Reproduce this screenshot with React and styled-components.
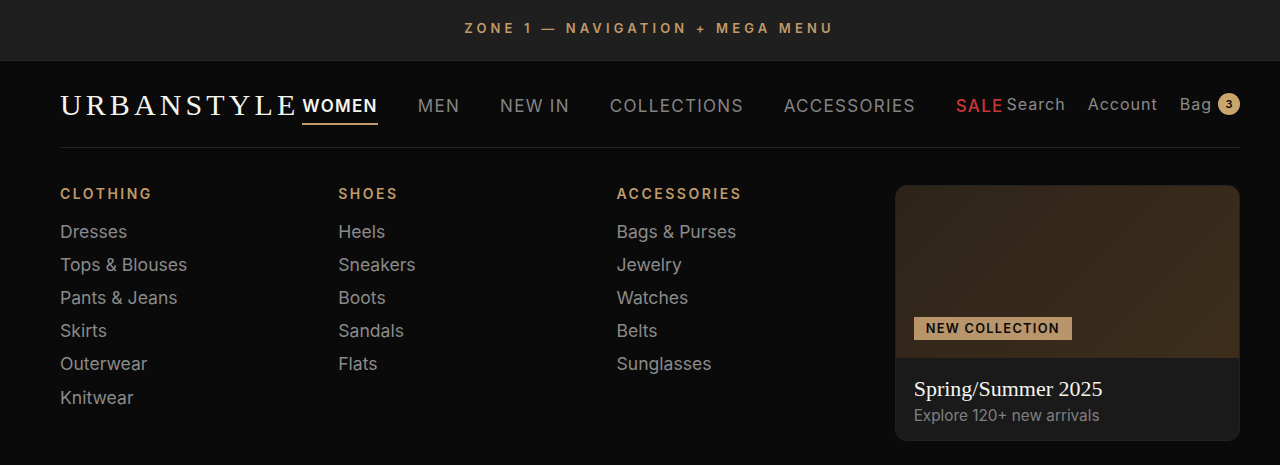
import React from "react";
import styled, { createGlobalStyle } from "styled-components";

const Global = createGlobalStyle`
  html, body { margin: 0; padding: 0; background: #0a0a0a; }
  * { box-sizing: border-box; }
  body { font-family: Inter, "Liberation Sans", sans-serif; }
`;
const Page = styled.div`
  width: 1280px; height: 465px; overflow: hidden; background: #0a0a0a;
`;
const ZoneBar = styled.div`
  height: 61px; background: #1f1f1f; border-bottom: 1px solid #262626;
  display: flex; align-items: center; justify-content: center;
  color: #c09a68; font-size: 13px; font-weight: 600; letter-spacing: 4.15px;
  padding: 0 0 4px 19px;
`;
const Nav = styled.header`padding: 0 40px 0 60px;`;
const NavRow = styled.div`
  height: 87px; display: flex; align-items: center; justify-content: space-between;
  border-bottom: 1px solid #222;
  padding-bottom: 1px;
`;
const Logo = styled.div`
  font-family: "Liberation Serif", serif; font-size: 30px; color: #f5f5f0;
  letter-spacing: 4.1px; flex: none; line-height: 1; margin-top: 3px;
`;
const Links = styled.nav`display: flex; gap: 40px; align-items: center;`;
const NavLink = styled.a`
  font-size: 17px; font-weight: ${p => (p.$active ? 600 : p.$sale ? 500 : 400)};
  letter-spacing: 1.3px; line-height: 20px; padding: 8px 0 7px;
  color: ${p => (p.$active ? "#f5f5f0" : p.$sale ? "#c93636" : "#848484")};
  border-bottom: 2px solid ${p => (p.$active ? "#c09a68" : "transparent")};
  margin-top: 5px;
`;
const Actions = styled.div`display: flex; gap: 22px; align-items: center; margin-top: 0;`;
const Action = styled.span`
  font-size: 16px; color: #8a8a8a; letter-spacing: 1px; display: flex; align-items: center; gap: 6px;
`;
const Badge = styled.span`
  width: 22px; height: 22px; border-radius: 50%; background: #c9a66b; color: #0a0a0a;
  font-size: 11px; font-weight: 600; letter-spacing: 0; display: flex; align-items: center; justify-content: center;
`;
const Mega = styled.div`
  display: grid; grid-template-columns: 1fr 1fr 1fr 1.5fr; gap: 48px; padding: 37px 0 0;
`;
const ColTitle = styled.h4`
  margin: 0 0 12.5px; font-size: 14px; font-weight: 600; letter-spacing: 2.5px;
  color: #c09a68; line-height: 17px;
`;
const Item = styled.a`
  display: block; font-size: 17.6px; color: #8a8a8a; line-height: 33.2px;
`;
const Card = styled.div`
  height: 256px; border-radius: 12px; overflow: hidden; background: #1a1a1a; border: 1px solid #222;
  display: flex; flex-direction: column;
`;
const Hero = styled.div`
  height: 172px; flex: none; background: linear-gradient(135deg, #2d2419, #3d2e1c);
  display: flex; align-items: flex-end; padding: 0 0 18px 18px;
`;
const Tag = styled.span`
  background: #b8956a; color: #0a0a0a; font-size: 12.8px; font-weight: 600; letter-spacing: 1.28px;
  padding: 0 12px; line-height: 23px; height: 23px;
`;
const CardBody = styled.div`padding: 18px 18px 0;`;
const CardTitle = styled.div`
  font-family: "Liberation Serif", serif; font-size: 22px; color: #f5f5f0; line-height: 26px; font-weight: 400;
`;
const CardSub = styled.div`font-size: 15.3px; color: #808080; line-height: 20px; margin-top: 4px;`;

const cols = [
  ["CLOTHING", ["Dresses", "Tops & Blouses", "Pants & Jeans", "Skirts", "Outerwear", "Knitwear"]],
  ["SHOES", ["Heels", "Sneakers", "Boots", "Sandals", "Flats"]],
  ["ACCESSORIES", ["Bags & Purses", "Jewelry", "Watches", "Belts", "Sunglasses"]],
];

export default function App() {
  return (
    <Page>
      <Global />
      <ZoneBar>ZONE 1 — NAVIGATION + MEGA MENU</ZoneBar>
      <Nav>
        <NavRow>
          <Logo>URBANSTYLE</Logo>
          <Links>
            <NavLink $active>WOMEN</NavLink>
            <NavLink>MEN</NavLink>
            <NavLink>NEW IN</NavLink>
            <NavLink>COLLECTIONS</NavLink>
            <NavLink>ACCESSORIES</NavLink>
            <NavLink $sale>SALE</NavLink>
          </Links>
          <Actions>
            <Action>Search</Action>
            <Action>Account</Action>
            <Action>Bag <Badge>3</Badge></Action>
          </Actions>
        </NavRow>
        <Mega>
          {cols.map(([t, items]) => (
            <div key={t}>
              <ColTitle>{t}</ColTitle>
              {items.map(i => <Item key={i}>{i}</Item>)}
            </div>
          ))}
          <Card>
            <Hero><Tag>NEW COLLECTION</Tag></Hero>
            <CardBody>
              <CardTitle>Spring/Summer 2025</CardTitle>
              <CardSub>Explore 120+ new arrivals</CardSub>
            </CardBody>
          </Card>
        </Mega>
      </Nav>
    </Page>
  );
}
